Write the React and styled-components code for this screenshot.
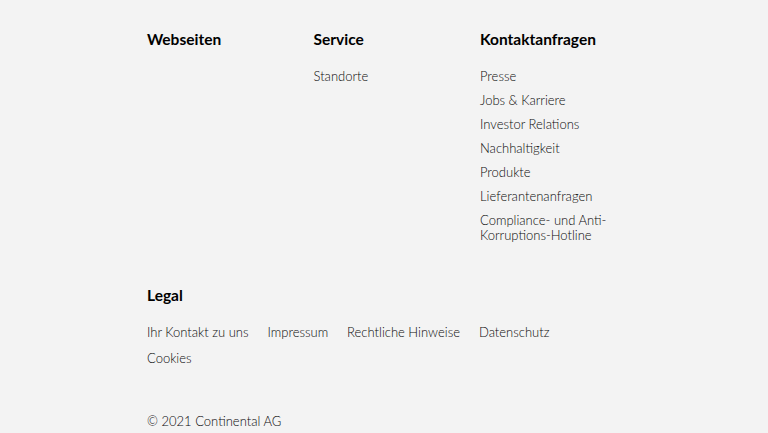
import React from 'react';
import styled, { createGlobalStyle } from 'styled-components';

const GlobalStyle = createGlobalStyle`
  html, body {
    margin: 0;
    padding: 0;
    background: #f3f3f3;
  }
  body {
    font-family: Lato, 'Liberation Sans', Arial, sans-serif;
    color: #000;
  }
`;

const Footer = styled.footer`
  background: #f3f3f3;
  width: 768px;
  height: 433px;
  padding: 30px 0 0 147px;
  box-sizing: border-box;
  overflow: hidden;
`;

const Columns = styled.div`
  display: grid;
  grid-template-columns: repeat(3, 166.5px);
`;

const Column = styled.div`
  display: flex;
  flex-direction: column;
`;

const Heading = styled.h3`
  margin: 0;
  font-size: 15.5px;
  line-height: 18px;
  font-weight: 700;
  color: #000;
`;

const LinkList = styled.ul`
  list-style: none;
  margin: 21px 0 0;
  padding: 0;
  display: flex;
  flex-direction: column;
  gap: 9px;
  width: 140px;
`;

const Link = styled.a`
  display: block;
  font-size: 13px;
  line-height: 15px;
  font-weight: 300;
  color: #0a0a0a;
  text-decoration: none;
`;

const Legal = styled.section`
  margin-top: 43px;
`;

const LegalRow = styled.div`
  display: flex;
  flex-wrap: wrap;
  width: 440px;
  column-gap: 19px;
  row-gap: 11px;
  margin-top: 21px;
`;

const Copyright = styled.p`
  margin: 47px 0 0;
  font-size: 13px;
  line-height: 16px;
  font-weight: 300;
  color: #0a0a0a;
`;

const columns = [
  { title: 'Webseiten', links: [] },
  { title: 'Service', links: ['Standorte'] },
  {
    title: 'Kontaktanfragen',
    links: [
      'Presse',
      'Jobs & Karriere',
      'Investor Relations',
      'Nachhaltigkeit',
      'Produkte',
      'Lieferantenanfragen',
      'Compliance- und Anti-Korruptions-Hotline',
    ],
  },
];

const legalLinks = ['Ihr Kontakt zu uns', 'Impressum', 'Rechtliche Hinweise', 'Datenschutz', 'Cookies'];

export default function App() {
  return (
    <>
      <GlobalStyle />
      <Footer>
        <Columns>
          {columns.map(col => (
            <Column key={col.title}>
              <Heading>{col.title}</Heading>
              <LinkList>
                {col.links.map(l => (
                  <li key={l}>
                    <Link href="#">{l}</Link>
                  </li>
                ))}
              </LinkList>
            </Column>
          ))}
        </Columns>
        <Legal>
          <Heading>Legal</Heading>
          <LegalRow>
            {legalLinks.map(l => (
              <Link key={l} href="#">{l}</Link>
            ))}
          </LegalRow>
        </Legal>
        <Copyright>© 2021 Continental AG</Copyright>
      </Footer>
    </>
  );
}
